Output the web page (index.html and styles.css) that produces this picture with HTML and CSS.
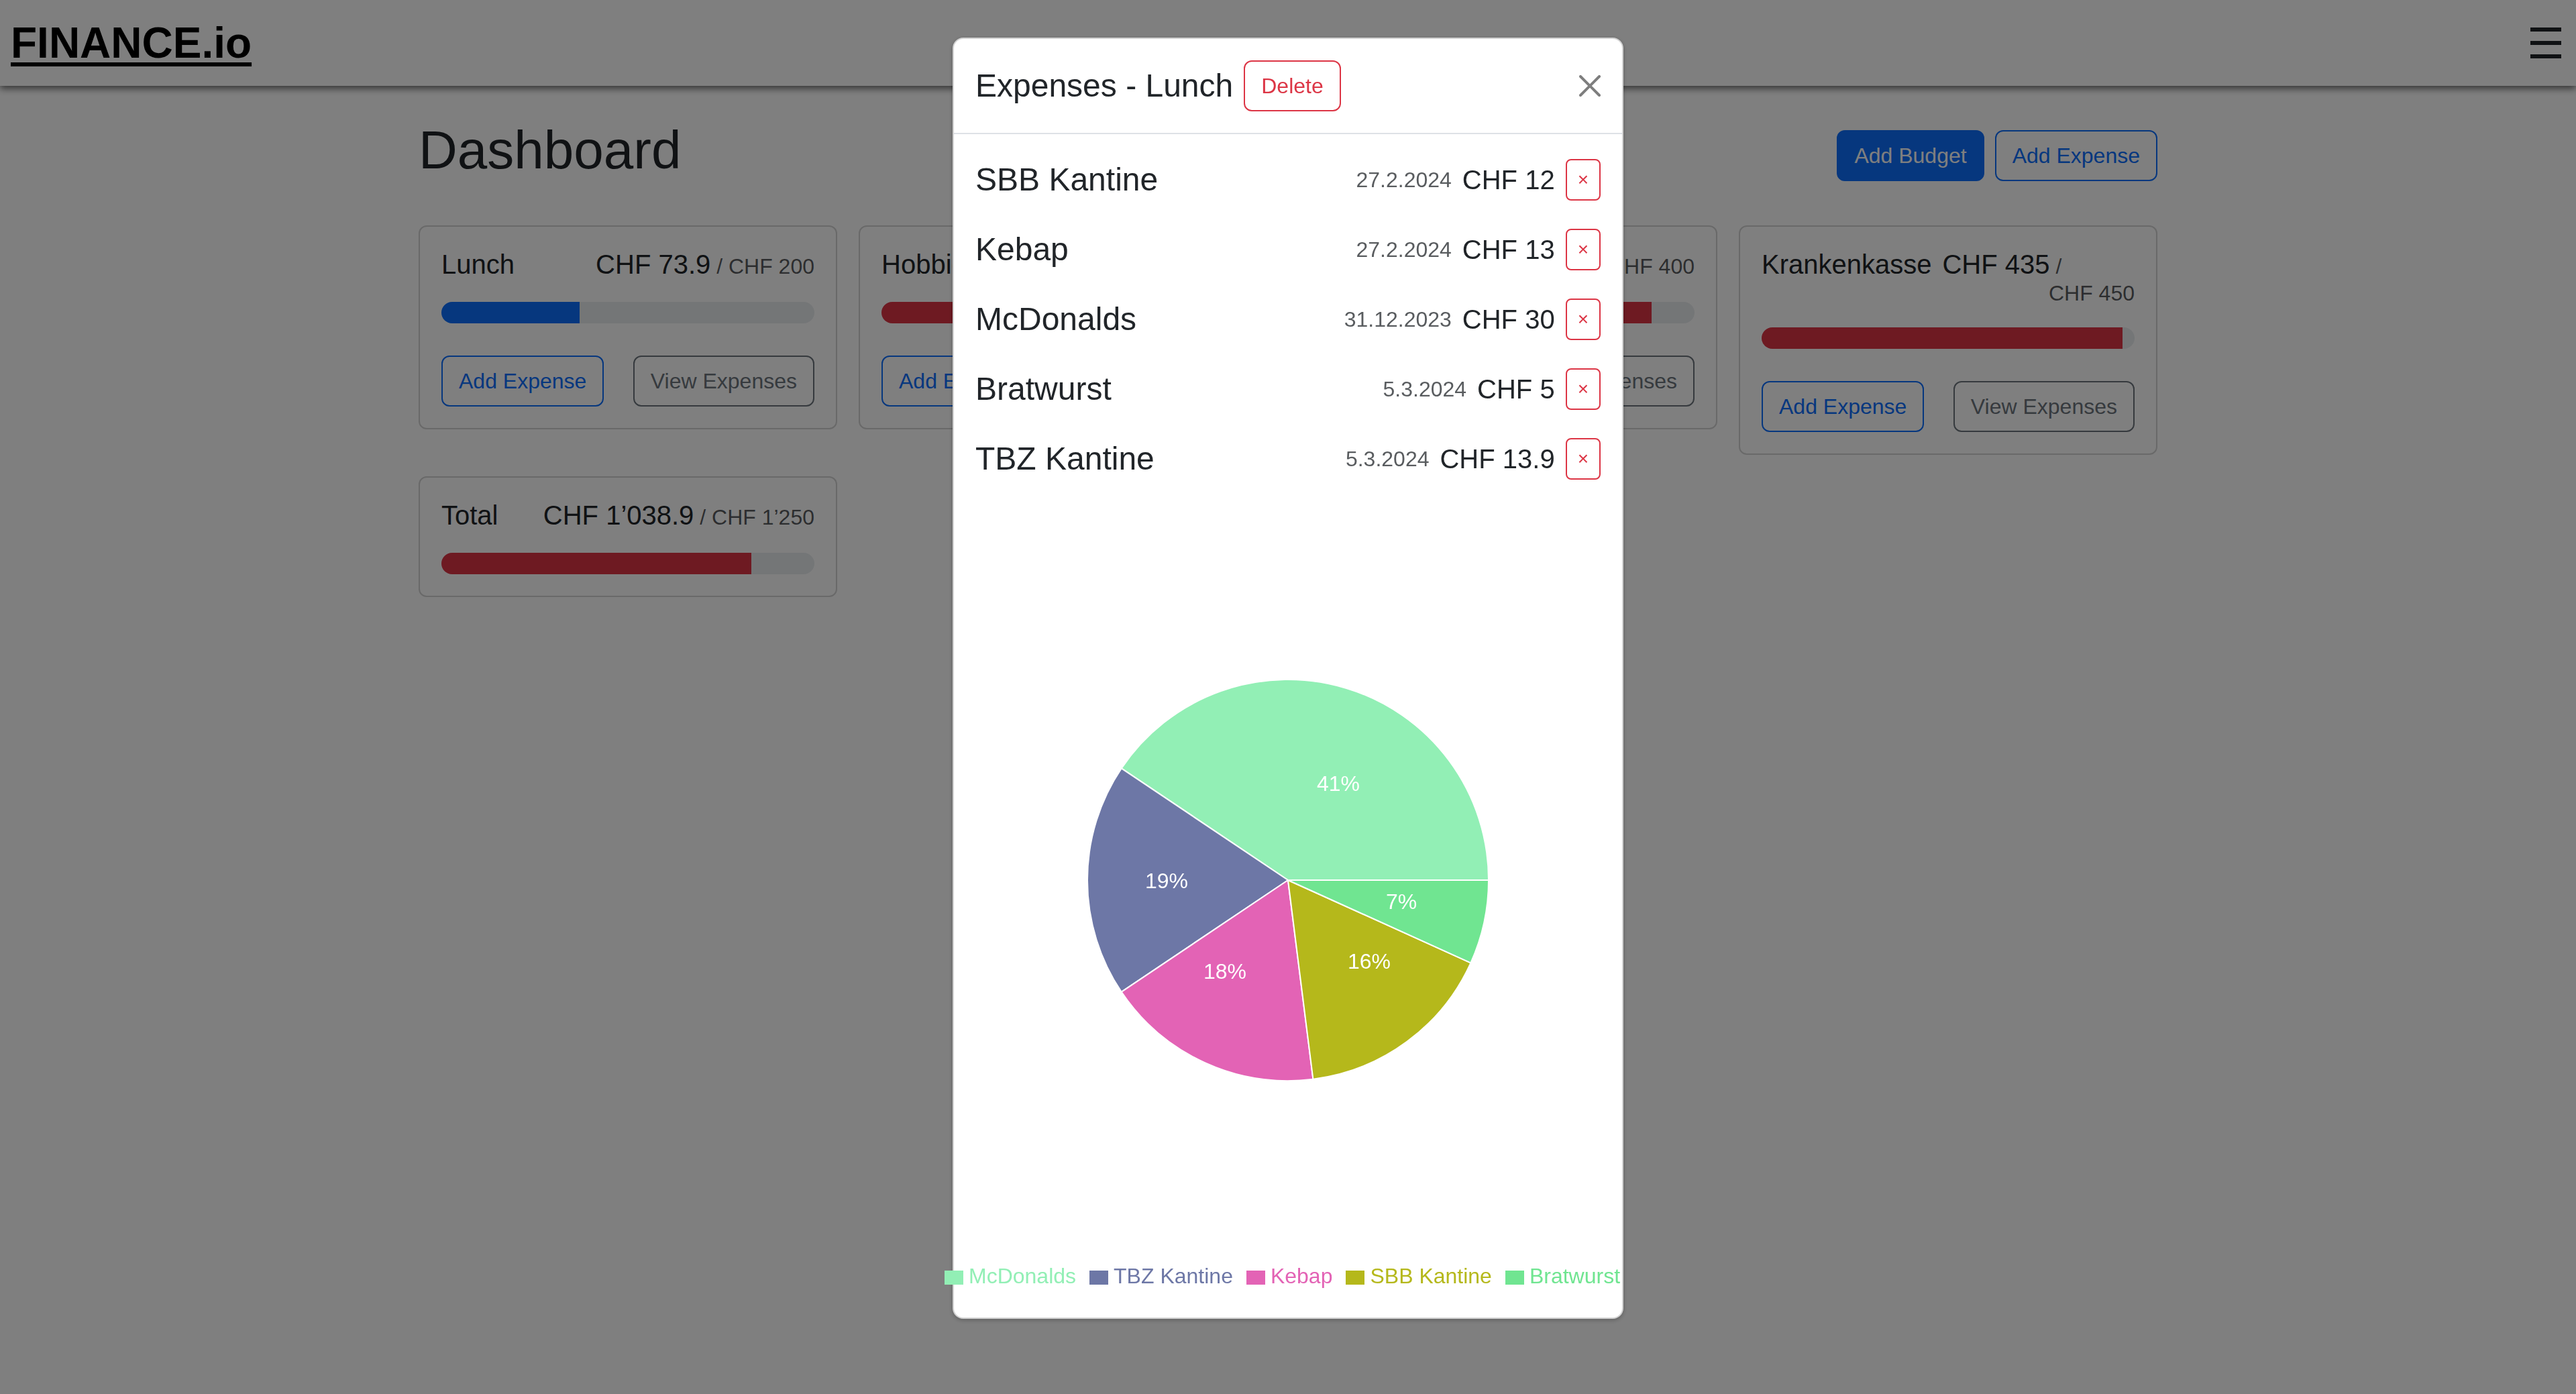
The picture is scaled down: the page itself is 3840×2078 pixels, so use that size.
FILE: index.html
```html
<!DOCTYPE html>
<html lang="de">
<head>
    <meta charset="UTF-8">
    <title>FINANCE.io - Dashboard</title>
    <link rel="stylesheet" href="styles.css">
</head>
<body>
    <nav class="navbar">
        <a class="brand" href="#">FINANCE.io</a>
        <button class="burger"><span></span><span></span><span></span></button>
    </nav>

    <main class="container">
        <div class="page-head">
            <h1>Dashboard</h1>
            <div class="actions">
                <button class="btn btn-primary">Add Budget</button>
                <button class="btn btn-outline-primary">Add Expense</button>
            </div>
        </div>

        <div class="budgets">
            <div class="card">
                <div class="card-head">
                    <h5 class="card-title">Lunch</h5>
                    <div class="amount"><span class="spent">CHF&nbsp;73.9</span> <small>/ CHF&nbsp;200</small></div>
                </div>
                <div class="progress"><div class="progress-bar" style="width: 37%"></div></div>
                <div class="card-actions">
                    <button class="btn btn-outline-primary">Add Expense</button>
                    <button class="btn btn-outline-secondary">View Expenses</button>
                </div>
            </div>
            <div class="card">
                <div class="card-head">
                    <h5 class="card-title">Hobbies</h5>
                    <div class="amount"><span class="spent">CHF&nbsp;176</span> <small>/ CHF&nbsp;200</small></div>
                </div>
                <div class="progress"><div class="progress-bar danger" style="width: 88%"></div></div>
                <div class="card-actions">
                    <button class="btn btn-outline-primary">Add Expense</button>
                    <button class="btn btn-outline-secondary">View Expenses</button>
                </div>
            </div>
            <div class="card">
                <div class="card-head">
                    <h5 class="card-title">Freizeit</h5>
                    <div class="amount"><span class="spent">CHF&nbsp;354</span> <small>/ CHF&nbsp;400</small></div>
                </div>
                <div class="progress"><div class="progress-bar danger" style="width: 88.5%"></div></div>
                <div class="card-actions">
                    <button class="btn btn-outline-primary">Add Expense</button>
                    <button class="btn btn-outline-secondary">View Expenses</button>
                </div>
            </div>
            <div class="card">
                <div class="card-head">
                    <h5 class="card-title">Krankenkasse</h5>
                    <div class="amount"><span class="spent">CHF&nbsp;435</span> <small>/ CHF&nbsp;450</small></div>
                </div>
                <div class="progress"><div class="progress-bar danger" style="width: 96.7%"></div></div>
                <div class="card-actions">
                    <button class="btn btn-outline-primary">Add Expense</button>
                    <button class="btn btn-outline-secondary">View Expenses</button>
                </div>
            </div>
            <div class="card">
                <div class="card-head">
                    <h5 class="card-title">Total</h5>
                    <div class="amount"><span class="spent">CHF&nbsp;1’038.9</span> <small>/ CHF&nbsp;1’250</small></div>
                </div>
                <div class="progress"><div class="progress-bar danger" style="width: 83.1%"></div></div>
            </div>
        </div>
    </main>

    <div class="backdrop"></div>

    <div class="modal">
        <div class="modal-dialog">
            <div class="modal-content">
                <div class="modal-header">
                    <h4 class="modal-title">Expenses - Lunch</h4>
                    <button class="btn btn-outline-danger">Delete</button>
                    <button class="btn-close" aria-label="Close">
                        <svg viewBox="0 0 16 16" width="32" height="32"><path d="M.293.293a1 1 0 0 1 1.414 0L8 6.586 14.293.293a1 1 0 1 1 1.414 1.414L9.414 8l6.293 6.293a1 1 0 0 1-1.414 1.414L8 9.414l-6.293 6.293a1 1 0 0 1-1.414-1.414L6.586 8 .293 1.707a1 1 0 0 1 0-1.414z"/></svg>
                    </button>
                </div>
                <div class="modal-body">
                    <div class="expenses">
                        <div class="expense">
                            <h4 class="expense-name">SBB Kantine</h4>
                            <div class="expense-meta">
                                <span class="date">27.2.2024</span>
                                <span class="price">CHF&nbsp;12</span>
                                <button class="btn btn-sm btn-outline-danger">×</button>
                            </div>
                        </div>
                        <div class="expense">
                            <h4 class="expense-name">Kebap</h4>
                            <div class="expense-meta">
                                <span class="date">27.2.2024</span>
                                <span class="price">CHF&nbsp;13</span>
                                <button class="btn btn-sm btn-outline-danger">×</button>
                            </div>
                        </div>
                        <div class="expense">
                            <h4 class="expense-name">McDonalds</h4>
                            <div class="expense-meta">
                                <span class="date">31.12.2023</span>
                                <span class="price">CHF&nbsp;30</span>
                                <button class="btn btn-sm btn-outline-danger">×</button>
                            </div>
                        </div>
                        <div class="expense">
                            <h4 class="expense-name">Bratwurst</h4>
                            <div class="expense-meta">
                                <span class="date">5.3.2024</span>
                                <span class="price">CHF&nbsp;5</span>
                                <button class="btn btn-sm btn-outline-danger">×</button>
                            </div>
                        </div>
                        <div class="expense">
                            <h4 class="expense-name">TBZ Kantine</h4>
                            <div class="expense-meta">
                                <span class="date">5.3.2024</span>
                                <span class="price">CHF&nbsp;13.9</span>
                                <button class="btn btn-sm btn-outline-danger">×</button>
                            </div>
                        </div>
                    </div>

                    <svg class="pie" width="600" height="600" viewBox="0 0 600 600">
                        <g stroke="#fff" stroke-width="2" stroke-linejoin="round">
                            <path fill="#92efb5" d="M300 300 L599 300 A299 299 0 0 0 51.7 133.4 Z"/>
                            <path fill="#6d77a6" d="M300 300 L51.7 133.4 A299 299 0 0 0 51.7 466.6 Z"/>
                            <path fill="#e363b5" d="M300 300 L51.7 466.6 A299 299 0 0 0 337.4 596.7 Z"/>
                            <path fill="#b5b81b" d="M300 300 L337.4 596.7 A299 299 0 0 0 572.4 423.3 Z"/>
                            <path fill="#70e591" d="M300 300 L572.4 423.3 A299 299 0 0 0 599 300 Z"/>
                        </g>
                        <g class="pie-labels" fill="#fff" text-anchor="middle">
                            <text x="375" y="167">41%</text>
                            <text x="119" y="312">19%</text>
                            <text x="206" y="447">18%</text>
                            <text x="421" y="432">16%</text>
                            <text x="469" y="343">7%</text>
                        </g>
                    </svg>

                    <div class="legend">
                        <div class="legend-item mcd"><i></i>McDonalds</div>
                        <div class="legend-item tbz"><i></i>TBZ Kantine</div>
                        <div class="legend-item kebap"><i></i>Kebap</div>
                        <div class="legend-item sbb"><i></i>SBB Kantine</div>
                        <div class="legend-item brat"><i></i>Bratwurst</div>
                    </div>
                </div>
            </div>
        </div>
    </div>
</body>
</html>
```

FILE: styles.css
```css
body {
    margin: 0;
    font-family: "Liberation Sans", Arial, sans-serif;
    font-size: 32px;
    line-height: 1.5;
    color: #212529;
    background: #fff;
    overflow: hidden;
}
.navbar {
    position: relative;
    height: 128px;
    display: flex;
    align-items: center;
    justify-content: space-between;
    padding: 0 22px 0 16px;
    background: #fff;
    box-shadow: 0 4px 10px rgba(0,0,0,0.6);
}
.brand {
    font-size: 64px;
    font-weight: bold;
    line-height: 1.2;
    color: #000;
    text-decoration: underline;
    text-decoration-thickness: 6px;
    text-underline-offset: 7px;
}
.burger {
    width: 46px;
    height: 46px;
    padding: 0;
    border: none;
    background: none;
    display: flex;
    flex-direction: column;
    justify-content: space-between;
}
.burger span {
    height: 6px;
    background: #212529;
}
.container {
    max-width: 2592px;
    margin: 0 auto;
    padding: 0 24px;
}
.page-head {
    display: flex;
    align-items: center;
    justify-content: space-between;
    margin-top: 48px;
}
h1 {
    font-size: 80px;
    font-weight: normal;
    line-height: 1.2;
    margin: 0 0 16px;
}
.actions {
    display: flex;
    gap: 16px;
}
.btn {
    font-family: inherit;
    font-size: 32px;
    line-height: 48px;
    padding: 12px 24px;
    border: 2px solid transparent;
    border-radius: 12px;
    background: transparent;
    cursor: pointer;
}
.btn-primary {
    background: #0d6efd;
    border-color: #0d6efd;
    color: #fff;
}
.btn-outline-primary {
    color: #0d6efd;
    border-color: #0d6efd;
}
.btn-outline-secondary {
    color: #6c757d;
    border-color: #6c757d;
}
.btn-outline-danger {
    color: #dc3545;
    border-color: #dc3545;
}
.btn-sm {
    font-size: 28px;
    line-height: 42px;
    padding: 8px 16px;
    border-radius: 8px;
}
.budgets {
    display: grid;
    grid-template-columns: repeat(4, 1fr);
    gap: 32px;
    align-items: start;
    margin-top: 48px;
}
.card {
    border: 2px solid rgba(0,0,0,0.175);
    border-radius: 12px;
    padding: 32px;
    background: #fff;
}
.card-head {
    display: flex;
    justify-content: space-between;
    gap: 16px;
    margin-bottom: 32px;
}
.card-title {
    font-size: 40px;
    font-weight: normal;
    line-height: 1.2;
    margin: 0;
    white-space: nowrap;
}
.amount {
    font-size: 32px;
    line-height: 1.2;
    text-align: left;
    text-align-last: right;
}
.amount .spent {
    font-size: 40px;
}
.amount small {
    font-size: 32px;
    color: rgba(33,37,41,0.75);
}
.progress {
    height: 32px;
    background: #e9ecef;
    border-radius: 16px;
    overflow: hidden;
}
.progress-bar {
    height: 100%;
    background: #0d6efd;
}
.progress-bar.danger {
    background: #dc3545;
}
.card-actions {
    display: flex;
    justify-content: space-between;
    margin-top: 48px;
}
.backdrop {
    position: fixed;
    inset: 0;
    background: rgba(0,0,0,0.5);
}
.modal {
    position: fixed;
    inset: 0;
}
.modal-dialog {
    width: 1000px;
    margin: 56px auto;
}
.modal-content {
    background: #fff;
    border: 2px solid rgba(0,0,0,0.175);
    border-radius: 16px;
    box-shadow: 0 2px 6px rgba(0,0,0,0.25);
}
.modal-header {
    display: flex;
    align-items: center;
    padding: 32px;
    border-bottom: 2px solid #dee2e6;
}
.modal-title {
    font-size: 48px;
    font-weight: normal;
    line-height: 1.2;
    margin: 0 16px 0 0;
}
.btn-close {
    margin-left: auto;
    width: 32px;
    height: 32px;
    padding: 0;
    border: none;
    background: none;
    opacity: 0.5;
}
.btn-close svg {
    display: block;
}
.modal-body {
    padding: 32px;
}
.expenses {
    display: flex;
    flex-direction: column;
    gap: 42px;
    padding: 5px 0 42px;
}
.expense {
    display: flex;
    align-items: center;
    justify-content: space-between;
    height: 62px;
}
.expense-name {
    font-size: 48px;
    font-weight: normal;
    line-height: 1.2;
    margin: 0;
}
.expense-meta {
    display: flex;
    align-items: center;
    gap: 16px;
}
.date {
    color: rgba(33,37,41,0.75);
}
.price {
    font-size: 40px;
}
.pie {
    display: block;
    margin: 255px auto 0;
}
.pie-labels {
    font-size: 32px;
}
.legend {
    display: flex;
    width: max-content;
    gap: 20px;
    margin: 270px 0 10px -46px;
    font-size: 32px;
    line-height: 40px;
}
.legend-item {
    display: flex;
    align-items: center;
    gap: 8px;
}
.legend-item i {
    width: 28px;
    height: 21px;
    margin-top: 5px;
}
.mcd { color: #92efb5; }
.mcd i { background: #92efb5; }
.tbz { color: #6d77a6; }
.tbz i { background: #6d77a6; }
.kebap { color: #e363b5; }
.kebap i { background: #e363b5; }
.sbb { color: #b5b81b; }
.sbb i { background: #b5b81b; }
.brat { color: #70e591; }
.brat i { background: #70e591; }
```
